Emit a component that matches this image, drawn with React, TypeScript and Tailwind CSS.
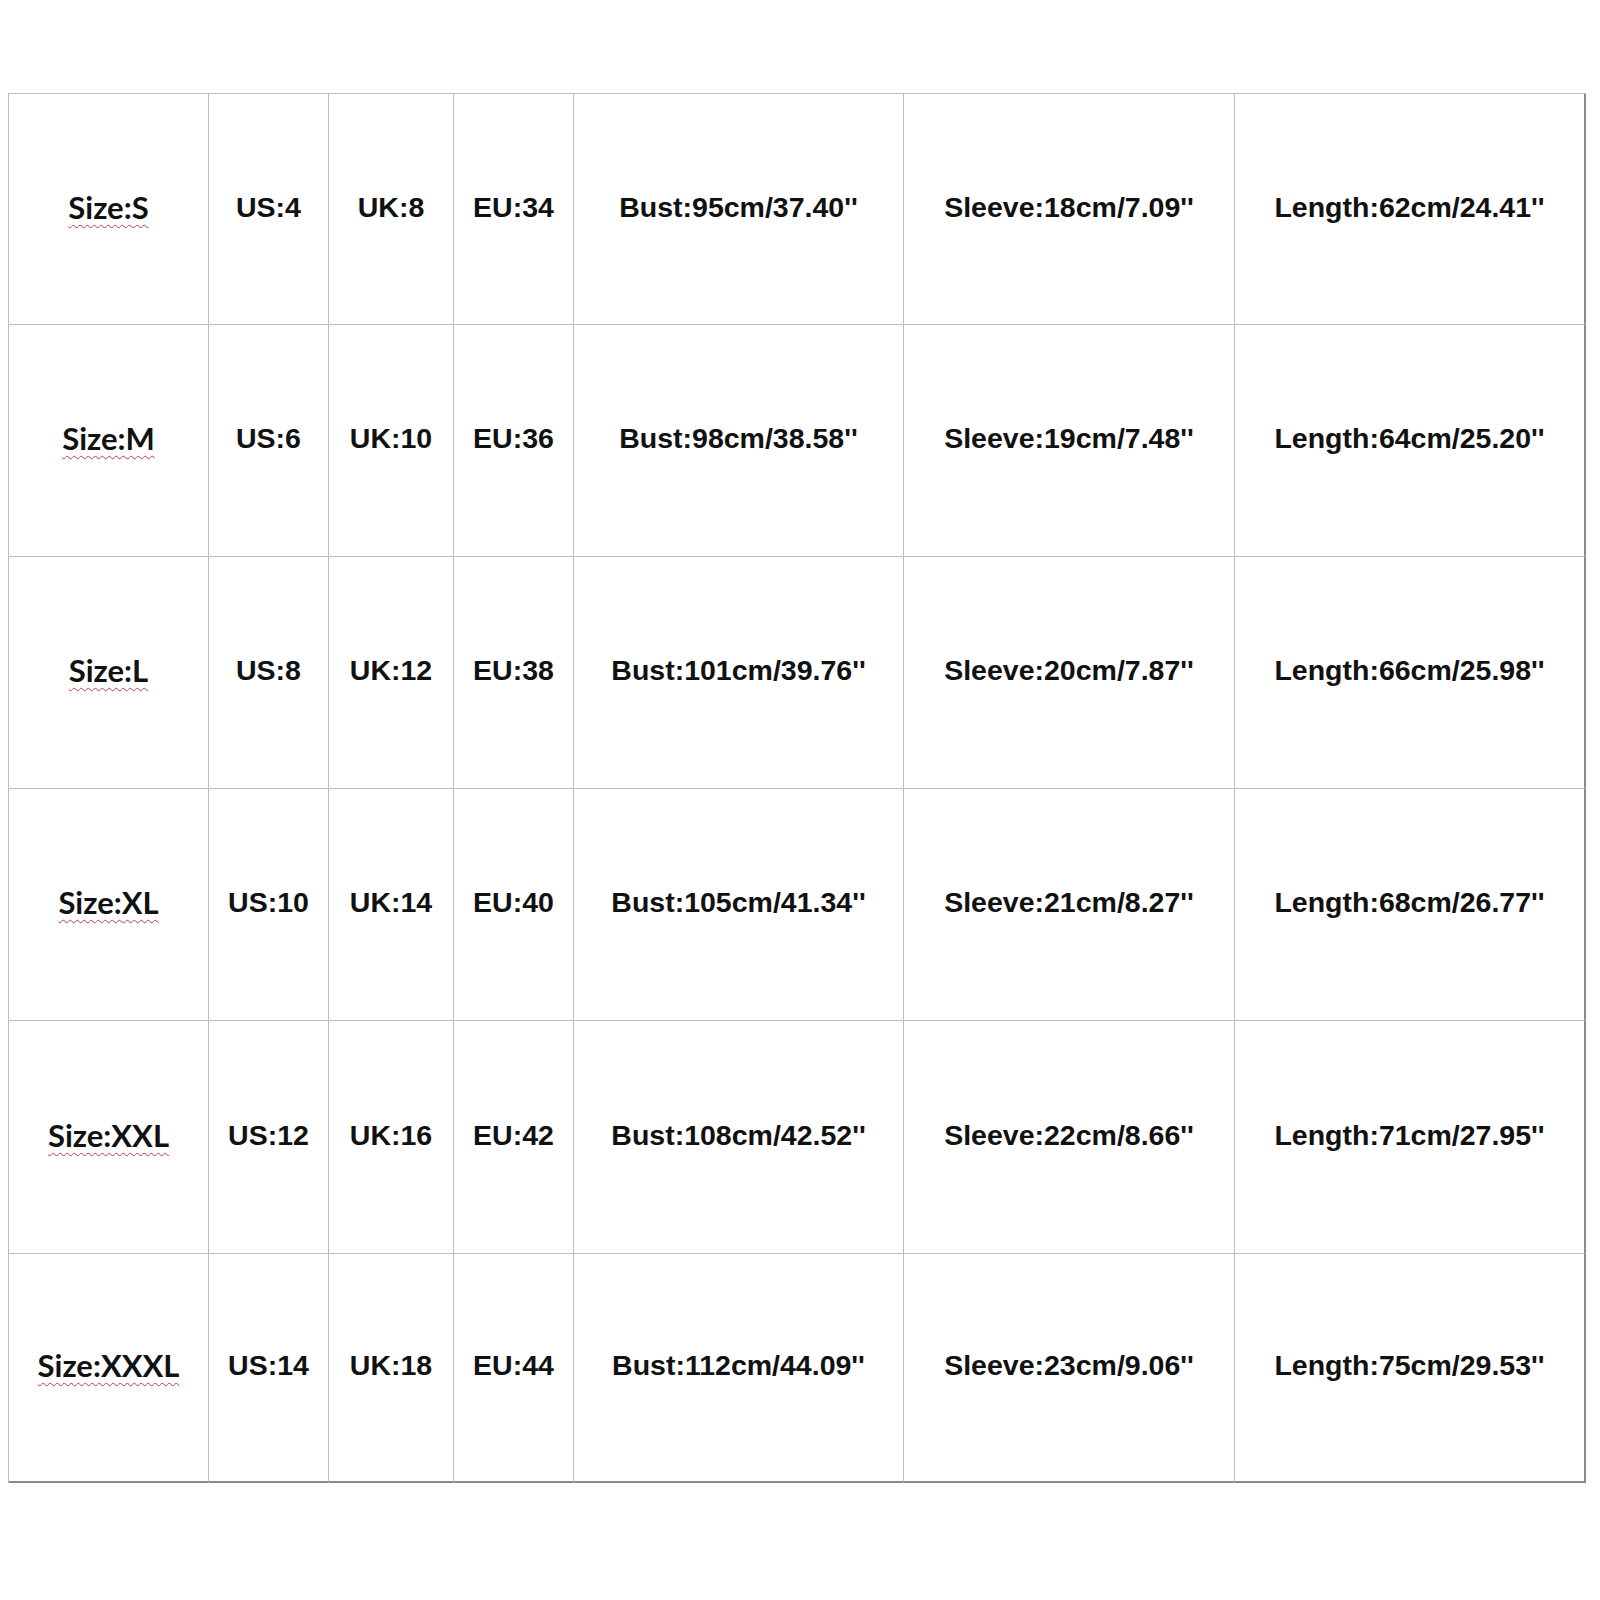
const rows = [
  ['S', '4', '8', '34', '95cm/37.40', '18cm/7.09', '62cm/24.41'],
  ['M', '6', '10', '36', '98cm/38.58', '19cm/7.48', '64cm/25.20'],
  ['L', '8', '12', '38', '101cm/39.76', '20cm/7.87', '66cm/25.98'],
  ['XL', '10', '14', '40', '105cm/41.34', '21cm/8.27', '68cm/26.77'],
  ['XXL', '12', '16', '42', '108cm/42.52', '22cm/8.66', '71cm/27.95'],
  ['XXXL', '14', '18', '44', '112cm/44.09', '23cm/9.06', '75cm/29.53'],
];

const rowHeights = ['h-[231px]', 'h-[232px]', 'h-[232px]', 'h-[232px]', 'h-[233px]', 'h-[229px]'];

function Cell({ children, className = '' }: { children: React.ReactNode; className?: string }) {
  return (
    <div className={`flex items-center justify-center border-r border-b border-[#bdbdbd] pb-1 ${className}`}>
      {children}
    </div>
  );
}

export default function App() {
  return (
    <div className="min-h-[1600px] w-[1600px] bg-white pt-[93px] pl-[8px]">
      <div
        className="grid w-fit grid-cols-[200px_120px_125px_120px_330px_331px_351px] border-t border-l border-[#bdbdbd] text-[28.5px] font-bold text-[#111] leading-none"
        style={{ fontFamily: '"Liberation Sans", Arial, sans-serif' }}
      >
        {rows.map((r, i) => {
          const last = i === rows.length - 1;
          const h = rowHeights[i];
          const bottom = last ? 'border-b-2 border-b-[#8a8a8a]' : '';
          return [
            <Cell key={`${i}-size`} className={`${h} ${bottom}`}>
              <span
                className="text-[31px] underline decoration-wavy decoration-[#c2375a] decoration-1 underline-offset-[5px]"
                style={{ fontFamily: 'Lato, "Open Sans", sans-serif' }}
              >
                Size:{r[0]}
              </span>
            </Cell>,
            <Cell key={`${i}-us`} className={`${h} ${bottom}`}>US:{r[1]}</Cell>,
            <Cell key={`${i}-uk`} className={`${h} ${bottom}`}>UK:{r[2]}</Cell>,
            <Cell key={`${i}-eu`} className={`${h} ${bottom}`}>EU:{r[3]}</Cell>,
            <Cell key={`${i}-bust`} className={`${h} ${bottom}`}>Bust:{r[4]}''</Cell>,
            <Cell key={`${i}-sleeve`} className={`${h} ${bottom}`}>Sleeve:{r[5]}''</Cell>,
            <Cell key={`${i}-len`} className={`${h} ${bottom} border-r-2 border-r-[#8a8a8a]`}>Length:{r[6]}''</Cell>,
          ];
        })}
      </div>
    </div>
  );
}
